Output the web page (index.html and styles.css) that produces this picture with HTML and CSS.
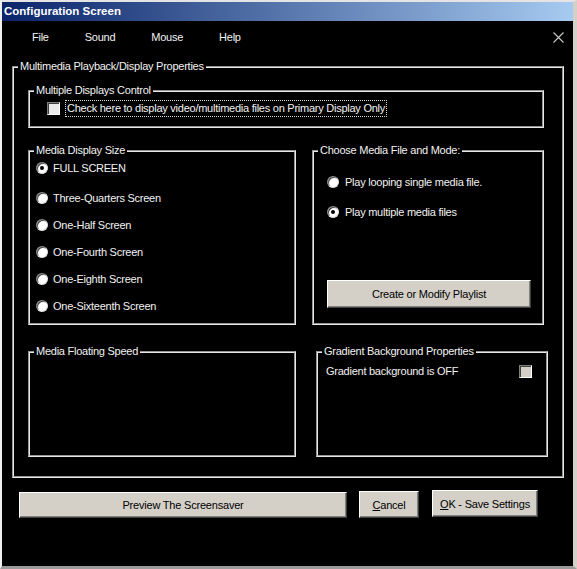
FILE: index.html
```html
<!DOCTYPE html>
<html lang="en">
<head>
    <meta charset="UTF-8">
    <title>Configuration Screen</title>
    <link rel="stylesheet" href="styles.css">
</head>
<body>
    <div class="window">
        <div class="titlebar">Configuration Screen</div>

        <div class="menubar">
            <span class="menu-item">File</span>
            <span class="menu-item">Sound</span>
            <span class="menu-item">Mouse</span>
            <span class="menu-item">Help</span>
            <svg class="close" width="11" height="11" viewBox="0 0 11 11">
                <path d="M0.5 0.5 L10.5 10.5 M10.5 0.5 L0.5 10.5" stroke="#c8c8c8" stroke-width="1.1" fill="none"/>
            </svg>
        </div>

        <fieldset class="group outer">
            <legend>Multimedia Playback/Display Properties</legend>
            <div class="outer-body">
                <fieldset class="group displays">
                    <legend>Multiple Displays Control</legend>
                    <div class="displays-row">
                        <span class="check"></span>
                        <span class="focus-label">Check here to display video/multimedia files on Primary Display Only</span>
                    </div>
                </fieldset>

                <div class="panels">
                    <fieldset class="group">
                        <legend>Media Display Size</legend>
                        <div class="sizes">
                            <div class="option"><span class="radio on"></span>FULL SCREEN</div>
                            <div class="option"><span class="radio"></span>Three-Quarters Screen</div>
                            <div class="option"><span class="radio"></span>One-Half Screen</div>
                            <div class="option"><span class="radio"></span>One-Fourth Screen</div>
                            <div class="option"><span class="radio"></span>One-Eighth Screen</div>
                            <div class="option"><span class="radio"></span>One-Sixteenth Screen</div>
                        </div>
                    </fieldset>

                    <fieldset class="group">
                        <legend>Choose Media File and Mode:</legend>
                        <div class="modes">
                            <div class="option"><span class="radio"></span>Play looping single media file.</div>
                            <div class="option"><span class="radio on"></span>Play multiple media files</div>
                            <button class="btn playlist">Create or Modify Playlist</button>
                        </div>
                    </fieldset>

                    <fieldset class="group">
                        <legend>Media Floating Speed</legend>
                    </fieldset>

                    <fieldset class="group gradient">
                        <legend>Gradient Background Properties</legend>
                        <div class="gradient-row">
                            <span>Gradient background is OFF</span>
                            <span class="check grey"></span>
                        </div>
                    </fieldset>
                </div>
            </div>
        </fieldset>

        <div class="actions">
            <button class="btn preview">Preview The Screensaver</button>
            <button class="btn cancel"><u>C</u>ancel</button>
            <button class="btn save"><u>O</u>K - Save Settings</button>
        </div>
    </div>
</body>
</html>
```

FILE: styles.css
```css
body {
    margin: 0;
    background: #fff;
    font-family: "Liberation Sans", Arial, sans-serif;
    font-size: 11px;
    letter-spacing: -0.25px;
    color: #f2f2f2;
}

.window {
    width: 577px;
    height: 569px;
    box-sizing: border-box;
    background: #000;
    border-style: solid;
    border-width: 2px 4px 3px 2px;
    border-color: #e4e4e4 #d4d0c8 #9a9a9a #f0f0f0;
}

.titlebar {
    height: 19px;
    line-height: 19px;
    padding-left: 2px;
    background: linear-gradient(to right, #0a246a, #a6caf0);
    color: #fff;
    font-weight: bold;
    font-size: 11.5px;
    letter-spacing: 0;
}

.menubar {
    display: flex;
    align-items: center;
    height: 32px;
    padding-left: 30px;
    gap: 36px;
}

    .menubar .close {
        margin-left: auto;
        margin-right: 9px;
    }

/* etched group boxes */
.group {
    margin: 0;
    padding: 0;
    min-width: 0;
    box-sizing: border-box;
    border: 2px groove #e8e8e8;
}

    .group legend {
        margin-left: 4px;
        padding: 0 2px;
        line-height: 13px;
    }

.outer {
    width: 552px;
    margin: 7px 0 0 10px;
}

.outer-body {
    padding: 11px 0 19px 14px;
}

.displays {
    width: 516px;
    height: 44px;
}

.displays-row {
    display: flex;
    align-items: center;
    gap: 5px;
    padding: 3px 0 0 17px;
}

.focus-label {
    line-height: 15px;
    padding: 0 1px;
    border: 1px dotted #d8d8d8;
}

.check {
    width: 13px;
    height: 13px;
    box-sizing: border-box;
    background: #ececec;
    border: 1px solid;
    border-color: #808080 #fff #fff #808080;
    box-shadow: inset 1px 1px 0 #404040;
}

    .check.grey {
        background: #d4d0c8;
    }

.panels {
    display: grid;
    grid-template-columns: 268px 232px;
    grid-template-rows: 181px 112px;
    column-gap: 16px;
    row-gap: 20px;
    margin-top: 16px;
}

.gradient {
    width: 232px;
    margin-left: 4px;
}

.option {
    display: flex;
    align-items: center;
    height: 16px;
}

.radio {
    display: flex;
    align-items: center;
    justify-content: center;
    width: 12px;
    height: 12px;
    box-sizing: border-box;
    border-radius: 50%;
    background: #fff;
    border: 1px solid;
    border-color: #808080 #e0e0e0 #e0e0e0 #808080;
    box-shadow: inset 1px 1px 0 #404040;
}

    .radio.on::after {
        content: "";
        width: 4px;
        height: 4px;
        border-radius: 50%;
        background: #000;
    }

.sizes {
    padding: 3px 0 0 6px;
}

    .sizes .option {
        gap: 5px;
        margin-bottom: 11px;
    }

        .sizes .option:first-child {
            margin-bottom: 14px;
        }

.modes {
    padding: 17px 0 0 13px;
}

    .modes .option {
        gap: 6px;
        margin-bottom: 14px;
    }

.btn {
    padding: 0;
    font-family: inherit;
    font-size: 11px;
    letter-spacing: -0.2px;
    color: #000;
    background: #d4d0c8;
    border: 1px solid;
    border-color: #fff #404040 #404040 #fff;
    box-shadow: inset -1px -1px 0 #808080;
}

.playlist {
    display: block;
    width: 204px;
    height: 28px;
    margin-top: 60px;
}

.gradient-row {
    display: flex;
    justify-content: space-between;
    align-items: center;
    height: 16px;
    padding: 5px 14px 0 8px;
}

.actions {
    display: flex;
    align-items: flex-start;
    padding: 13px 0 0 17px;
}

.preview {
    width: 328px;
    height: 26px;
    margin-top: 1px;
}

.cancel {
    width: 60px;
    height: 27px;
    margin-left: 12px;
}

.save {
    width: 106px;
    height: 27px;
    margin-left: 13px;
    margin-top: -1px;
}
```
